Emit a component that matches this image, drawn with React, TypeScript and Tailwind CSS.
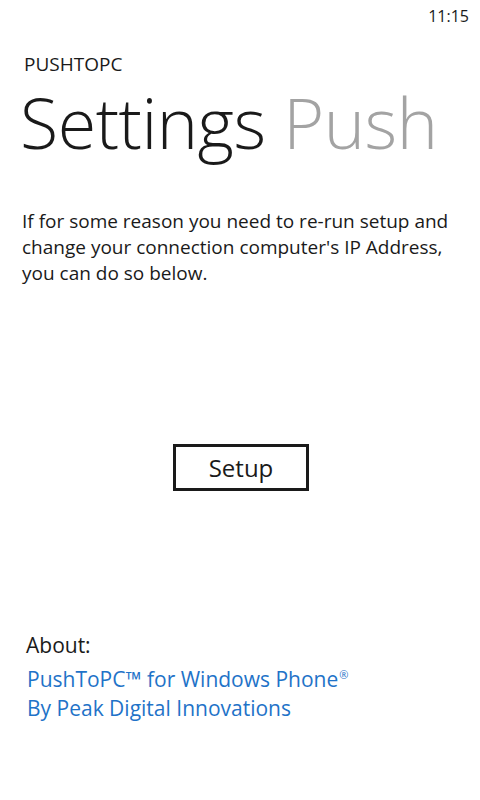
import React from 'react';

export default function App() {
  return (
    <div className="w-[480px] h-[800px] bg-white text-[#1a1a1a] flex flex-col font-['Open_Sans',sans-serif]">
      <div className="h-[32px] flex items-center justify-end pr-[11px] text-[16px] leading-none">
        11:15
      </div>

      <div className="pl-[24px] mt-[20px] text-[19px] leading-[24px]">PUSHTOPC</div>

      <div className="pl-[20px] mt-[11px] text-[70px] leading-[70px] font-light whitespace-nowrap tracking-[-0.5px]">
        Settings <span className="text-[#a3a3a3]">Push</span>
      </div>

      <p className="px-[22px] mt-[51px] text-[19px] leading-[26px]">
        If for some reason you need to re-run setup and change your connection computer's IP Address, you can do so below.
      </p>

      <div className="flex justify-center mt-[158px]">
        <button className="w-[136px] h-[47px] border-[3px] border-[#1a1a1a] text-[24px] leading-none flex items-center justify-center ml-[2px]">
          Setup
        </button>
      </div>

      <div className="pl-[26px] mt-[140px] text-[21px] leading-[28px]">About:</div>
      <div className="pl-[27px] mt-[6px] text-[21px] leading-[29px] text-[#1f73c8]">
        <div className="h-[29px]">
          PushToPC™ for Windows Phone
          <span className="relative -top-[8px] ml-[1px] text-[11px] leading-none">®</span>
        </div>
        <div>By Peak Digital Innovations</div>
      </div>
    </div>
  );
}
